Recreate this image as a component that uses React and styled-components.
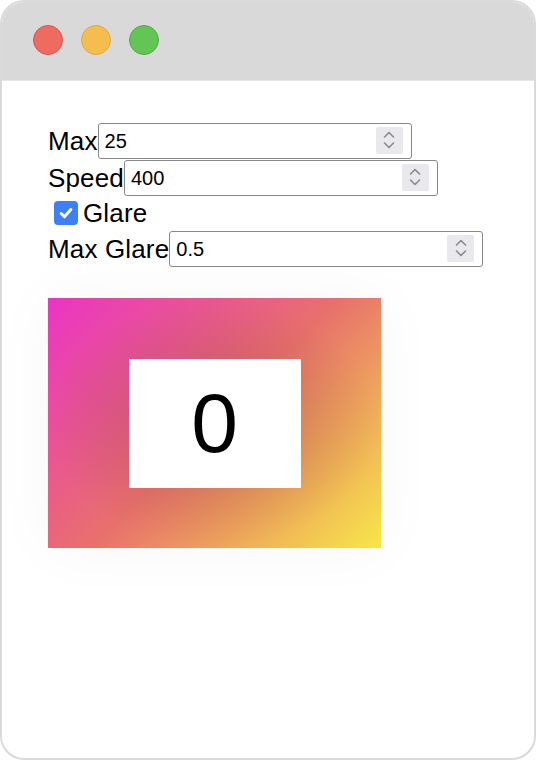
import styled, { createGlobalStyle } from "styled-components";

const GlobalStyle = createGlobalStyle`
	html, body {
		margin: 0;
		padding: 0;
		background: #ffffff;
	}
	body {
		font-family: "Liberation Sans", Arial, sans-serif;
		color: #000;
	}
`;

const Window = styled.div`
	width: 536px;
	height: 760px;
	box-sizing: border-box;
	border: 2px solid #dadada;
	border-radius: 24px;
	overflow: hidden;
	display: flex;
	flex-direction: column;
	background: #fff;
`;

const TitleBar = styled.div`
	height: 79px;
	flex-shrink: 0;
	background: #d9d9d9;
	border-bottom: 1px solid #e6e6e6;
	display: flex;
	align-items: center;
	gap: 18px;
	padding-left: 31px;
	padding-bottom: 2px;
	box-sizing: border-box;
`;

const lights = {
	red: ["#ee6b60", "#d7564b"],
	yellow: ["#f4be4f", "#dea845"],
	green: ["#62c554", "#53ab45"],
};

const Light = styled.span`
	width: 30px;
	height: 30px;
	box-sizing: border-box;
	border-radius: 50%;
	background: ${(p) => lights[p.$color][0]};
	border: 1px solid ${(p) => lights[p.$color][1]};
`;

const Content = styled.div`
	padding: 41px 0 0 46px;
	display: flex;
	flex-direction: column;
	align-items: flex-start;
`;

const Row = styled.label`
	display: flex;
	align-items: center;
	height: ${(p) => (p.$h ? p.$h : 37)}px;
	font-size: 26px;
	letter-spacing: 0.15px;
	line-height: 1;
`;

const Field = styled.span`
	position: relative;
	display: inline-flex;
	align-items: center;
	width: 314px;
	height: 36px;
	box-sizing: border-box;
	border: 1.5px solid #88888c;
	border-radius: 3px;
	background: #fff;
	padding-left: 6px;
	font-size: 20px;
	letter-spacing: 0;
`;

const Spinner = styled.span`
	position: absolute;
	right: 8px;
	top: 3px;
	width: 27px;
	height: 27px;
	background: #e8e8ed;
	border-radius: 2px;
	display: flex;
	align-items: center;
	justify-content: center;
`;

const Check = styled.span`
	width: 24px;
	height: 24px;
	margin: 0 5px 0 6px;
	border-radius: 4px;
	background: #3d7ff5;
	display: inline-flex;
	align-items: center;
	justify-content: center;
`;

const Stage = styled.div`
	margin-top: 31px;
	width: 333px;
	height: 250px;
	display: flex;
	align-items: center;
	justify-content: center;
	background:
		radial-gradient(ellipse 50% 50% at 50% 50%, rgba(110, 50, 40, 0.28), rgba(110, 50, 40, 0) 100%),
		linear-gradient(135deg, #eb34c4 0%, #e8706c 50%, #f7e748 100%);
	box-shadow: 0 0 60px rgba(0, 0, 0, 0.04);
`;

const Face = styled.div`
	width: 172px;
	height: 129px;
	background: #fff;
	display: flex;
	align-items: center;
	justify-content: center;
	font-size: 84px;
	font-family: "Liberation Sans", Arial, sans-serif;
`;

function NumberField({ value }) {
	return (
		<Field>
			{value}
			<Spinner>
				<svg width="14" height="22" viewBox="0 0 14 22" fill="none" stroke="#8a8a8e" strokeWidth="1.6" strokeLinecap="round" strokeLinejoin="round">
					<path d="M2.5 8 L7 3.5 L11.5 8" />
					<path d="M2.5 14 L7 18.5 L11.5 14" />
				</svg>
			</Spinner>
		</Field>
	);
}

export default function App() {
	return (
		<>
			<GlobalStyle />
			<Window>
				<TitleBar>
					<Light $color="red" />
					<Light $color="yellow" />
					<Light $color="green" />
				</TitleBar>
				<Content>
					<Row>
						Max
						<NumberField value="25" />
					</Row>
					<Row>
						Speed
						<NumberField value="400" />
					</Row>
					<Row $h={34}>
						<Check>
							<svg width="16" height="16" viewBox="0 0 16 16" fill="none" stroke="#fff" strokeWidth="3" strokeLinecap="round" strokeLinejoin="round">
								<path d="M3.2 8.5 L6.5 11.8 L12.8 4.5" />
							</svg>
						</Check>
						Glare
					</Row>
					<Row>
						Max Glare
						<NumberField value="0.5" />
					</Row>
					<Stage>
						<Face>0</Face>
					</Stage>
				</Content>
			</Window>
		</>
	);
}
